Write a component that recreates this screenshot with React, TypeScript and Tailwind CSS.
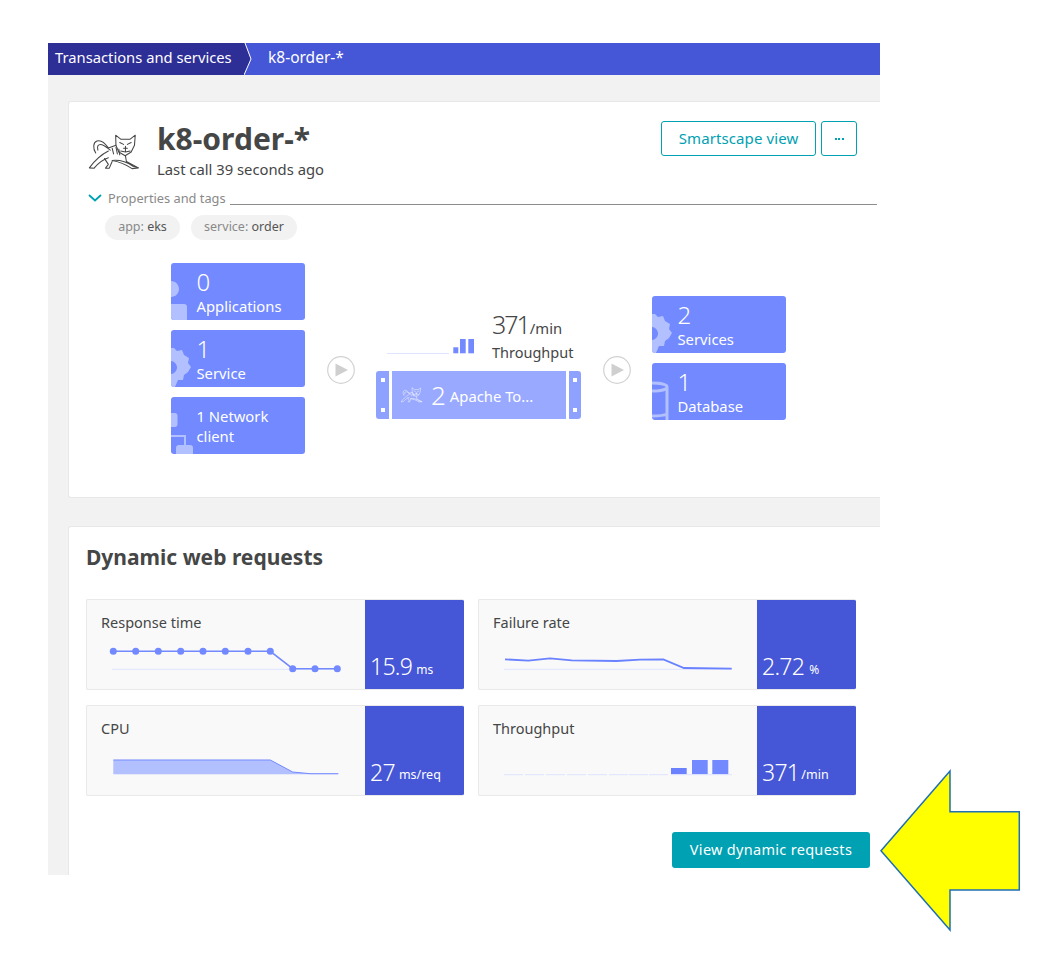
const sans = "font-['Noto_Sans','Open_Sans',sans-serif]"

function TomcatCat({ className, stroke }: { className: string; stroke: string }) {
  return (
    <svg className={className} viewBox="0 0 54 40" fill="none" stroke={stroke} strokeWidth="1.100" strokeLinejoin="round" strokeLinecap="round">
      {/* head */}
      <path d="M27.700 2.300L33 6.500H43L48.300 2.300L47.500 13L44 20L37.700 24L31 20L28 13Z" />
      <path d="M32 10l4 2M44 10l-4 2M36 16h4M38 14v5M33 19l5 1 5-1" />
      {/* tail */}
      <path d="M20 15.700C16 10 12 7 8 8.500C4 10 3.500 16 6.700 21M9 18C8 14 9 12 12 12C15 12 18 15 22 18" />
      {/* back and legs */}
      <path d="M20 15.700L28 13M0 36.700C5 30 10 24 20 19M0 36.700L5 37C9 32 14 28 20 26M16 27L20 33L17 37L21 37L24 30" />
      <path d="M24 29C32 28 40 31 46 35L51.700 36.700L45 37.500C38 33 30 30 24 29M38 24L39 30L51.700 36.700" />
      <path d="M24 16l1.500 6M28 15l1.500 7M31 17l1 6" />
    </svg>
  )
}

function Gear() {
  return (
    <svg className="absolute left-0 top-[18px] h-[39px] w-[20px]" viewBox="0 0 20 39">
      <path fill="#b3c0ff" fillRule="evenodd" d="M0 0h3l3 3 5-1 2 5 5 3-1 5 3 4-3 5-4 3-1 5-5 0-3 7H0zM0 13v13c3 0 6-3 6-6.500S3 13 0 13z" />
    </svg>
  )
}

function Person() {
  return (
    <svg className="absolute bottom-0 left-0 h-[39px] w-[16px]" viewBox="0 0 16 39">
      <path fill="#b3c0ff" d="M0 0c4.400 0 8 3.600 8 8s-3.600 8-8 8zM0 23h13c2 0 3 1 3 3v13H0z" />
    </svg>
  )
}

function Network() {
  return (
    <svg className="absolute bottom-0 left-0 h-[41px] w-[22px]" viewBox="0 0 22 41">
      <path fill="#b3c0ff" d="M0 0h4c1.500 0 2.500 1 2.500 2.500v9C6.500 13 5.500 14 4 14H0zM0 22h15v10h-2v-8H0zM5 41v-6c0-2 1-3 3-3h11c2 0 3 1 3 3v6z" />
    </svg>
  )
}

function Database() {
  return (
    <svg className="absolute bottom-0 left-0 h-[40px] w-[18px]" viewBox="0 0 18 40" fill="none" stroke="#b3c0ff" strokeWidth="3">
      <path d="M0 3c6 0 15 1 15 4s-9 4-15 4M15 7v33M0 36c6 0 12-.500 15-2" />
    </svg>
  )
}

function Tile({ value, label, icon, twoLine }: { value?: string; label: string; icon: React.ReactNode; twoLine?: boolean }) {
  return (
    <div className="relative h-[57px] w-[134px] overflow-hidden rounded-[3px] bg-[#7289ff] pl-[25.500px] text-white">
      {icon}
      {twoLine ? (
        <div className="pt-[10px] text-[14.800px] leading-[19.500px]">{label}</div>
      ) : (
        <>
          <div className="pt-[4px] text-[24px] font-light leading-[30px]">{value}</div>
          <div className="mt-px text-[14.800px] leading-[17px]">{label}</div>
        </>
      )}
    </div>
  )
}

function PlayCircle({ className }: { className: string }) {
  return (
    <svg className={className} viewBox="0 0 28 28">
      <circle cx="14" cy="14" r="13.300" fill="#fff" stroke="#d2d2d2" strokeWidth="1.200" />
      <path d="M8.500 7.500L21 14 8.500 20.500z" fill="#cfcfcf" />
    </svg>
  )
}

function Server() {
  return (
    <div className="flex h-[48px] w-[205px] gap-[3px] text-white">
      <div className="flex w-[13px] flex-col items-center justify-between rounded-l-[3px] bg-[#8fa1ff] py-[7px]">
        <span className="h-[4px] w-[4px] bg-white" />
        <span className="h-[4px] w-[4px] bg-white" />
      </div>
      <div className="flex flex-1 items-center bg-[#99a9ff] pl-[9px]">
        <TomcatCat className="h-[16px] w-[22px]" stroke="#fff" />
        <span className="ml-[8px] text-[26px] font-light leading-none">2</span>
        <span className="ml-[4px] mt-[2px] text-[14.800px]">Apache To...</span>
      </div>
      <div className="flex w-[12px] flex-col items-center justify-between rounded-r-[3px] bg-[#8fa1ff] py-[7px]">
        <span className="h-[4px] w-[4px] bg-white" />
        <span className="h-[4px] w-[4px] bg-white" />
      </div>
    </div>
  )
}

function Metric({ title, value, unit, chart, unitClass }: { title: string; value: string; unit: string; chart: React.ReactNode; unitClass: string }) {
  return (
    <div className="flex h-[91px] overflow-hidden rounded-[2px] border border-r-0 border-[#e9e9e9] bg-[#f9f9f9]">
      <div className="flex-1 pl-[14px] pt-[12px]">
        <div className="text-[14.500px] leading-[20px] text-[#454646]">{title}</div>
        <svg className="mt-[8px] h-[40px] w-[260px]" viewBox="0 0 260 40">{chart}</svg>
      </div>
      <div className="flex w-[99px] items-end whitespace-nowrap bg-[#4556d7] pb-[8px] pl-[5px] text-white">
        <span className="text-[23px] font-light leading-[30px] tracking-[-0.700px]">{value}</span>
        <span className={unitClass}>{unit}</span>
      </div>
    </div>
  )
}

const responseX = [12.3, 34.7, 57.3, 79.7, 102, 124.3, 147, 169.3, 191.7, 214, 236.3]

const responseChart = (
  <>
    <line x1="11" y1="29.300" x2="240" y2="29.300" stroke="#dfe4ff" />
    <polyline fill="none" stroke="#7289ff" strokeWidth="1.500" points="12.300,11.300 169.300,11.300 191.700,28.700 236.300,28.700" />
    {responseX.map((x, i) => (
      <circle key={x} cx={x} cy={i < 8 ? 11.3 : 28.7} r="3.500" fill="#7289ff" />
    ))}
  </>
)

const failureChart = (
  <g transform="translate(-1 0)">
    <line x1="12" y1="29.300" x2="240" y2="29.300" stroke="#dfe4ff" />
    <polyline fill="none" stroke="#6a82ff" strokeWidth="1.800" points="13,19.300 36.300,20.700 58,18.300 79.700,20.300 124.700,21 148,19.700 171.300,19.300 192,28 239.700,28.700" />
  </g>
)

const cpuChart = (
  <>
    <path d="M12.300 14H169.300L191.700 26L209 27.700H237.300V28.300H12.300z" fill="#b3c0ff" />
    <polyline fill="none" stroke="#7289ff" strokeWidth="1" points="12.300,14 169.300,14 191.700,26 209,27.700 237.300,27.700" />
  </>
)

const throughputChart = (
  <g transform="translate(-1 0)">
    {[12, 33, 54, 75, 96, 117, 137, 157].map((x) => (
      <line key={x} x1={x} y1="28.700" x2={x + 19} y2="28.700" stroke="#dfe4ff" />
    ))}
    <rect x="179" y="22" width="15.700" height="6.300" fill="#6a82ff" />
    <rect x="200" y="14" width="15.700" height="14.300" fill="#7289ff" />
    <rect x="220.300" y="14" width="16" height="14.300" fill="#7289ff" />
    <line x1="179" y1="28.700" x2="240" y2="28.700" stroke="#dfe4ff" />
  </g>
)

export default function App() {
  return (
    <div className={`relative min-h-[962px] bg-white pl-[48px] pt-[43px] ${sans}`}>
      <div className="h-[832px] w-[832px] overflow-hidden bg-[#f2f2f2]">

        {/* Breadcrumb */}
        <div className="flex h-[32px] bg-[#4556d7] leading-[28px] text-white">
          <div className="flex">
            <div className="w-[196px] whitespace-nowrap bg-[#2e2e97] pl-[7px] text-[14.750px]">Transactions and services</div>
            <svg className="h-[32px] w-[14px]" viewBox="0 0 14 32">
              <path d="M0 0h1l6 16-7 16z" fill="#2e2e97" />
              <path d="M1 0l6 16-7 16" fill="none" stroke="#fff" strokeWidth="1" />
            </svg>
          </div>
          <div className="pl-[10px] text-[15.500px]">k8-order-*</div>
        </div>

        {/* Overview card */}
        <div className="ml-[20px] mt-[26px] h-[397px] rounded-l-[3px] border border-r-0 border-[#e8e8e8] bg-white pl-[19px] pr-[23px] pt-[19px]">
          <div className="flex items-start justify-between">
            <div className="flex">
              <TomcatCat className="mt-[12px] h-[38px] w-[54px]" stroke="#454646" />
              <div className="ml-[15px] text-[#454646]">
                <h1 className="text-[30px] font-bold leading-[36px]">k8-order-*</h1>
                <p className="text-[14.800px] leading-[24px]">Last call 39 seconds ago</p>
              </div>
            </div>
            <div className="flex gap-[5px] text-[15px] text-[#00a1b2]">
              <button className="h-[35px] w-[155px] rounded-[3px] border border-[#00a1b2] tracking-[0.100px]">Smartscape view</button>
              <button className="flex h-[35px] w-[36px] items-center justify-center gap-[1.500px] rounded-[3px] border border-[#00a1b2]">
                <span className="h-[2px] w-[2px] bg-[#00a1b2]" />
                <span className="h-[2px] w-[2px] bg-[#00a1b2]" />
                <span className="h-[2px] w-[2px] bg-[#00a1b2]" />
              </button>
            </div>
          </div>

          {/* Properties and tags */}
          <div className="mr-[-20px] mt-[8px] flex items-center">
            <svg className="h-[8px] w-[14px]" viewBox="0 0 14 8">
              <path d="M1 1l6 5.500L13 1" fill="none" stroke="#00a1b2" strokeWidth="1.800" />
            </svg>
            <span className="ml-[6px] text-[12.800px] leading-[18px] text-[#898989]">Properties and tags</span>
            <span className="ml-[4px] mt-[13px] h-px flex-1 bg-[#8c8c8c]" />
          </div>
          <div className="ml-[17px] mt-[8px] flex gap-[11px] text-[12.500px]">
            <span className="flex h-[25px] w-[75px] items-center justify-center rounded-full bg-[#f2f2f2] text-[#898989]">
              app:&nbsp;<span className="text-[#555]">eks</span>
            </span>
            <span className="flex h-[25px] w-[106px] items-center justify-center rounded-full bg-[#f2f2f2] text-[#898989]">
              service:&nbsp;<span className="text-[#555]">order</span>
            </span>
          </div>

          {/* Service flow */}
          <div className="ml-[83px] mt-[23px] flex items-start">
            <div className="flex flex-col gap-[10px]">
              <Tile value="0" label="Applications" icon={<Person />} />
              <Tile value="1" label="Service" icon={<Gear />} />
              <Tile label="1 Network client" twoLine icon={<Network />} />
            </div>
            <PlayCircle className="ml-[22px] mt-[93px] h-[28px] w-[28px]" />
            <div className="ml-[21px] mt-[50px]">
              <div className="relative h-[58px] w-[205px]">
                <svg className="absolute left-[11px] top-[24px] h-[20px] w-[90px]" viewBox="0 0 90 20">
                  <line x1="0" y1="16.500" x2="62" y2="16.500" stroke="#dfe4ff" />
                  <rect x="66.300" y="10.300" width="5" height="6" fill="#7289ff" />
                  <rect x="73" y="2" width="5.700" height="14.300" fill="#7289ff" />
                  <rect x="81.300" y="2" width="5.700" height="14.300" fill="#7289ff" />
                </svg>
                <div className="absolute left-[116px] top-[-2px] whitespace-nowrap text-[#454646]">
                  <div className="leading-[27px]">
                    <span className="text-[25px] font-light tracking-[-2px]">371</span>
                    <span className="ml-[1px] text-[14.800px]">/min</span>
                  </div>
                  <div className="text-[14.500px] leading-[20px]">Throughput</div>
                </div>
              </div>
              <Server />
            </div>
            <PlayCircle className="ml-[22px] mt-[93px] h-[28px] w-[28px]" />
            <div className="ml-[21px] mt-[33px] flex flex-col gap-[10px]">
              <Tile value="2" label="Services" icon={<Gear />} />
              <Tile value="1" label="Database" icon={<Database />} />
            </div>
          </div>
        </div>

        {/* Dynamic web requests */}
        <div className="ml-[20px] mt-[28px] h-[352px] rounded-l-[3px] border border-r-0 border-[#e8e8e8] bg-white pl-[17px] pt-[15px]">
          <h2 className="text-[21px] font-bold leading-[30px] text-[#454646]">Dynamic web requests</h2>
          <div className="mt-[27px] grid w-[770px] grid-cols-2 gap-x-[14px] gap-y-[15px]">
            <Metric title="Response time" value="15.9" unit="ms" unitClass="mb-[2px] ml-[4px] text-[12px]" chart={responseChart} />
            <Metric title="Failure rate" value="2.72" unit="%" unitClass="mb-[2px] ml-[5px] text-[12px]" chart={failureChart} />
            <Metric title="CPU" value="27" unit="ms/req" unitClass="mb-[2px] ml-[4px] text-[12.500px]" chart={cpuChart} />
            <Metric title="Throughput" value="371" unit="/min" unitClass="mb-[2px] ml-[2px] text-[12.500px]" chart={throughputChart} />
          </div>
          <div className="mr-[10px] mt-[36px] flex justify-end">
            <button className="h-[36px] w-[198px] rounded-[3px] bg-[#00a1b2] text-[14.500px] tracking-[0.300px] text-white">View dynamic requests</button>
          </div>
        </div>
      </div>

      {/* Yellow call-out arrow */}
      <svg className="absolute left-0 top-0 h-[962px] w-[1045px]" viewBox="0 0 1045 962" fill="none">
        <polygon points="881,850.700 950,771 950,811.700 1019.300,811.700 1019.300,890 950,890 950,930" fill="#ffff00" stroke="#1f6fb5" strokeWidth="1.500" />
      </svg>
    </div>
  )
}
